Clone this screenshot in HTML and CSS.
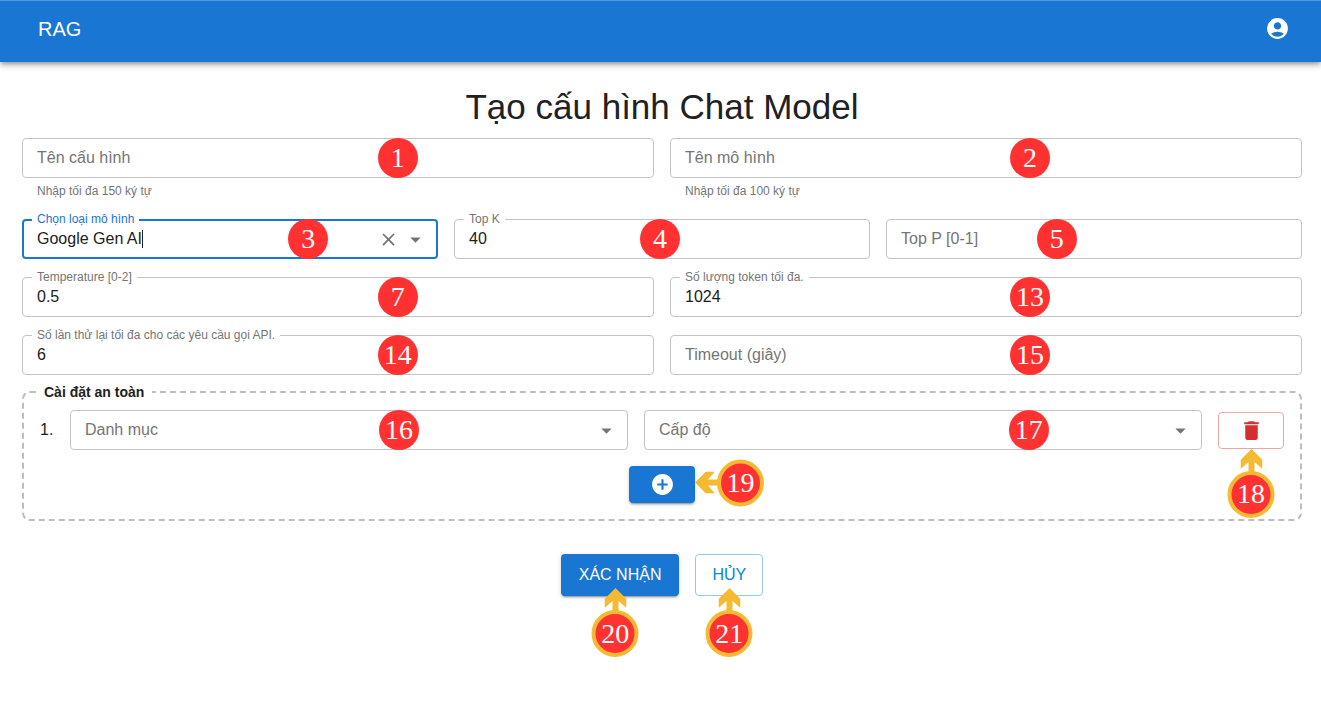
FILE: index.html
```html
<!DOCTYPE html>
<html lang="vi">
<head>
<meta charset="utf-8">
<meta name="viewport" content="width=device-width, initial-scale=1">
<title>Tạo cấu hình Chat Model</title>
<link rel="stylesheet" href="styles.css">
</head>
<body>
<svg class="defs" aria-hidden="true">
  <symbol id="arrow-up" viewBox="0 0 22 23"><path d="M11 0 22 11V20L14 13V23H8V13L0 20V11Z"/></symbol>
  <symbol id="arrow-left" viewBox="0 0 23 22"><path d="M0 11 11 0H20L13 8H23V14H13L20 22H11Z"/></symbol>
</svg>
<header class="appbar">
  <span class="brand">RAG</span>
  <button class="account" type="button" aria-label="Tài khoản">
    <svg viewBox="0 0 24 24"><path d="M12 2C6.48 2 2 6.48 2 12s4.48 10 10 10 10-4.48 10-10S17.52 2 12 2m0 4c1.93 0 3.500 1.570 3.500 3.500S13.930 13 12 13s-3.500-1.570-3.500-3.500S10.070 6 12 6m0 14c-2.030 0-4.430-.82-6.140-2.880C7.550 15.800 9.680 15 12 15s4.450.8 6.140 2.120C16.430 19.180 14.030 20 12 20"/></svg>
  </button>
</header>
<main class="page">
  <h1 class="title">Tạo cấu hình Chat Model</h1>
  <form>
    <div class="rows">
      <div class="row">
        <div class="cell">
          <div class="field">
            <input class="control" id="name" type="text">
            <label class="label" for="name">Tên cấu hình</label>
            <span class="badge left-col">1</span>
          </div>
          <p class="helper">Nhập tối đa 150 ký tự</p>
        </div>
        <div class="cell">
          <div class="field">
            <input class="control" id="model" type="text">
            <label class="label" for="model">Tên mô hình</label>
            <span class="badge right-col">2</span>
          </div>
          <p class="helper">Nhập tối đa 100 ký tự</p>
        </div>
      </div>
      <div class="row">
        <div class="field focused">
          <input class="control fit" id="type" type="text" value="Google Gen AI">
          <span class="caret"></span>
          <label class="label raised" for="type">Chọn loại mô hình</label>
          <span class="tools">
            <button class="tool" type="button" aria-label="Xóa"><svg class="clear" viewBox="0 0 24 24"><path d="M19 6.410 17.590 5 12 10.590 6.410 5 5 6.410 10.590 12 5 17.590 6.410 19 12 13.410 17.590 19 19 17.590 13.410 12z"/></svg></button>
            <button class="tool" type="button" aria-label="Mở"><svg class="drop" viewBox="0 0 24 24"><path d="m7 10 5 5 5-5z"/></svg></button>
          </span>
          <span class="badge third-a">3</span>
        </div>
        <div class="field">
          <input class="control" id="topk" type="text" value="40">
          <label class="label raised" for="topk">Top K</label>
          <span class="badge third-b">4</span>
        </div>
        <div class="field">
          <input class="control" id="topp" type="text">
          <label class="label" for="topp">Top P [0-1]</label>
          <span class="badge third-c">5</span>
        </div>
      </div>
      <div class="row">
        <div class="field">
          <input class="control" id="temp" type="text" value="0.5">
          <label class="label raised" for="temp">Temperature [0-2]</label>
          <span class="badge left-col">7</span>
        </div>
        <div class="field">
          <input class="control" id="tokens" type="text" value="1024">
          <label class="label raised" for="tokens">Số lượng token tối đa.</label>
          <span class="badge right-col">13</span>
        </div>
      </div>
      <div class="row">
        <div class="field">
          <input class="control" id="retries" type="text" value="6">
          <label class="label raised" for="retries">Số lần thử lại tối đa cho các yêu cầu gọi API.</label>
          <span class="badge left-col">14</span>
        </div>
        <div class="field">
          <input class="control" id="timeout" type="text">
          <label class="label" for="timeout">Timeout (giây)</label>
          <span class="badge right-col">15</span>
        </div>
      </div>
    </div>
    <fieldset class="safety">
      <legend>Cài đặt an toàn</legend>
      <div class="setting">
        <span class="index">1.</span>
        <div class="field">
          <select class="control" id="category"><option value=""></option></select>
          <label class="label" for="category">Danh mục</label>
          <svg class="drop select-drop" viewBox="0 0 24 24"><path d="m7 10 5 5 5-5z"/></svg>
          <span class="badge category-col">16</span>
        </div>
        <div class="field">
          <select class="control" id="level"><option value=""></option></select>
          <label class="label" for="level">Cấp độ</label>
          <svg class="drop select-drop" viewBox="0 0 24 24"><path d="m7 10 5 5 5-5z"/></svg>
          <span class="badge third-a">17</span>
        </div>
        <div class="anchor">
          <button class="btn icon-btn danger" type="button" aria-label="Xóa"><svg viewBox="0 0 24 24"><path d="M6 19c0 1.100.9 2 2 2h8c1.100 0 2-.9 2-2V7H6zM19 4h-3.500l-1-1h-5l-1 1H5v2h14z"/></svg></button>
          <span class="callout below"><svg class="arrow-v"><use href="#arrow-up"/></svg><span class="ring">18</span></span>
        </div>
      </div>
      <div class="center">
        <div class="anchor">
          <button class="btn icon-btn primary" type="button" aria-label="Thêm"><svg viewBox="0 0 24 24"><path d="M12 2C6.480 2 2 6.480 2 12s4.480 10 10 10 10-4.480 10-10S17.520 2 12 2m5 11h-4v4h-2v-4H7v-2h4V7h2v4h4z"/></svg></button>
          <span class="callout beside"><svg class="arrow-h"><use href="#arrow-left"/></svg><span class="ring">19</span></span>
        </div>
      </div>
    </fieldset>
    <div class="center actions">
      <div class="anchor">
        <button class="btn primary submit" type="submit">XÁC NHẬN</button>
        <span class="callout over confirm"><svg class="arrow-v"><use href="#arrow-up"/></svg><span class="ring">20</span></span>
      </div>
      <div class="anchor">
        <button class="btn outlined" type="button">HỦY</button>
        <span class="callout over"><svg class="arrow-v"><use href="#arrow-up"/></svg><span class="ring">21</span></span>
      </div>
    </div>
  </form>
</main>
</body>
</html>
```
FILE: styles.css
```css
* { box-sizing: border-box; }
body {
  min-height: 100vh;
  margin: 0;
  background: #fff;
  color: #212121;
  font: 16px/24px "Liberation Sans", Arial, sans-serif;
}
button, input, select { font: inherit; color: inherit; }
svg { display: block; fill: currentColor; }
.defs { position: absolute; width: 0; height: 0; }

.appbar {
  display: flex;
  align-items: center;
  justify-content: space-between;
  height: 62px;
  padding: 0 31px 6px 38px;
  background: #1976d2;
  border-top: 1px solid #5598dc;
  color: #fff;
  box-shadow: 0 2px 4px -1px rgba(0, 0, 0, .3), 0 4px 5px rgba(0, 0, 0, .14), 0 1px 10px rgba(0, 0, 0, .12);
}
.brand { font-size: 20px; }
.account { padding: 0; border: 0; background: none; }
.account svg { width: 25px; height: 25px; }

.page { padding: 24px 19px 72px 22px; }
.title {
  margin: 0 0 10px;
  font-size: 35px;
  font-weight: 400;
  line-height: 42px;
  text-align: center;
}

.rows { display: grid; gap: 18px; }
.row {
  display: grid;
  grid-auto-flow: column;
  grid-auto-columns: minmax(0, 1fr);
  gap: 16px;
}

.field {
  position: relative;
  display: flex;
  align-items: center;
  height: 40px;
  border: 1px solid #c4c4c4;
  border-radius: 4px;
}
.control {
  width: 100%;
  height: 100%;
  padding: 0 14px;
  border: 0;
  outline: 0;
  background: none;
  appearance: none;
}
.fit { width: auto; field-sizing: content; padding: 0 0 0 13px; }
.caret { width: 1px; height: 18px; background: #212121; }
.label {
  position: absolute;
  left: 14px;
  color: #757575;
  pointer-events: none;
}
.raised {
  top: -9px;
  left: 9px;
  padding: 0 5px;
  background: #fff;
  font-size: 12px;
  line-height: 16px;
}
.focused { border: 2px solid #1976d2; }
.focused .label { left: 8px; top: -10px; color: #1976d2; }
.helper {
  margin: 4px 0 0 15px;
  color: #757575;
  font-size: 12px;
  line-height: 19px;
}
.tools {
  display: flex;
  align-items: center;
  margin-left: auto;
  padding-right: 6px;
  color: #757575;
}
.tool { padding: 0 2px; border: 0; background: none; }
.clear { width: 21px; height: 21px; }
.drop { width: 25px; height: 25px; }
.select-drop {
  position: absolute;
  right: 8px;
  color: #757575;
  pointer-events: none;
}

.badge, .ring {
  display: grid;
  place-items: center;
  border-radius: 50%;
  background: #ff3131;
  color: #fff;
  font: 28px/1 "Liberation Serif", "Times New Roman", serif;
}
.badge {
  position: absolute;
  top: 50%;
  width: 40px;
  height: 40px;
  transform: translate(-50%, -50%);
}
.left-col { left: 59.5%; }
.right-col { left: 57%; }
.category-col { left: 59%; }
.third-a { left: 69%; }
.third-b { left: 49.5%; }
.third-c { left: 41%; }

.safety {
  min-width: 0;
  margin: 9px 0 0;
  padding: 10px 16px 16px;
  border: 2px dashed #bdbdbd;
  border-radius: 8px;
}
.safety legend {
  margin-left: -4px;
  padding: 0 8px;
  font-size: 14px;
  font-weight: 700;
  line-height: 16px;
}
.setting { display: flex; align-items: center; gap: 16px; margin-bottom: 16px; }
.setting .field { flex: 1 1 0; }
.index { width: 14px; }

.anchor { position: relative; display: flex; }
.center { display: flex; justify-content: center; gap: 16px; }
.actions { margin-top: 33px; }
.btn {
  padding: 8px 16px;
  border: 1px solid transparent;
  border-radius: 4px;
  background: #fff;
}
.submit { padding: 8px 17px; }
.icon-btn { display: grid; place-items: center; width: 66px; padding: 5px; }
.icon-btn svg { width: 25px; height: 25px; }
.primary {
  background: #1976d2;
  color: #fff;
  box-shadow: 0 3px 1px -2px rgba(0, 0, 0, .2), 0 2px 2px rgba(0, 0, 0, .14), 0 1px 5px rgba(0, 0, 0, .12);
}
.danger { border-color: #eea5a5; color: #d32f2f; }
.outlined { border-color: #90cbee; color: #0288d1; }

.callout {
  position: absolute;
  z-index: 1;
  display: flex;
  align-items: center;
  color: #f5b932;
}
.ring { width: 47px; height: 47px; border: 4px solid #f5b932; }
.arrow-v { width: 22px; height: 23px; margin-bottom: -1px; }
.arrow-h { width: 23px; height: 22px; margin-right: -1px; }
.below, .over {
  left: 50%;
  top: 100%;
  flex-direction: column;
  transform: translateX(-50%);
}
.over { top: calc(100% - 8px); }
.confirm { left: 46%; }
.beside { left: 100%; top: 45%; transform: translateY(-50%); }
```
